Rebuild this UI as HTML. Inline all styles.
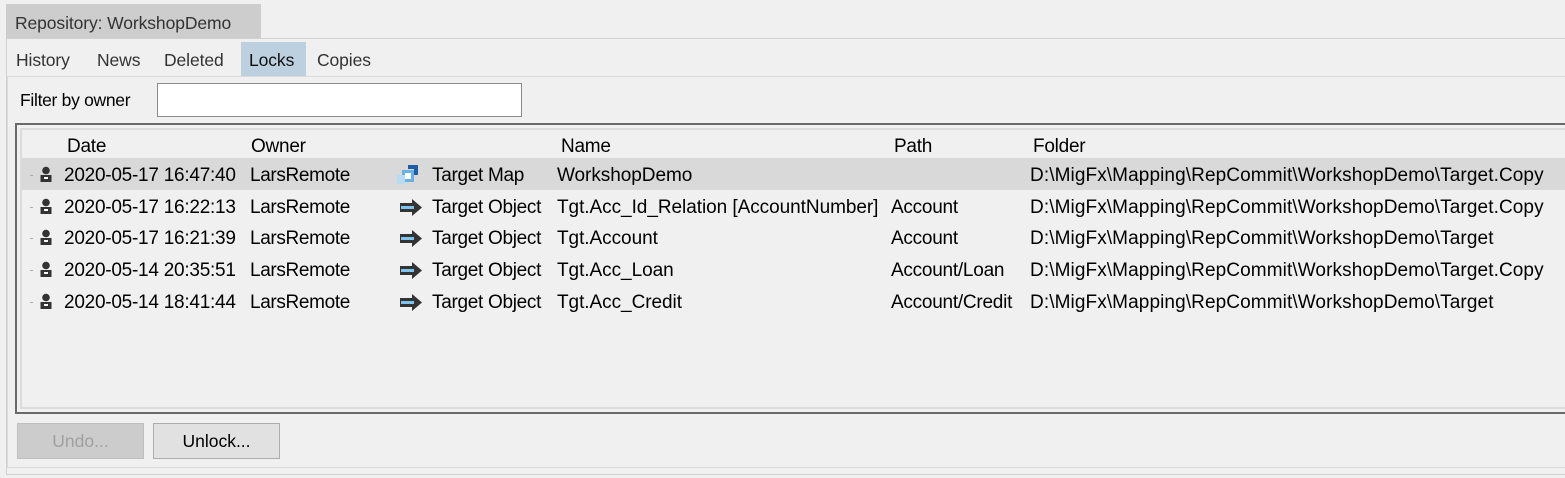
<!DOCTYPE html>
<html><head><style>
body{margin:0;width:1565px;height:478px;background:#f0f0f0;font-family:"Liberation Sans",sans-serif;color:#000;position:relative;overflow:hidden}
.a{position:absolute;white-space:nowrap}
.r{font-size:19px;letter-spacing:-0.25px}
.t{font-size:17.5px;color:#333;letter-spacing:-0.1px}
</style></head><body>
<div class="a" style="left:6px;top:4px;width:255px;height:34px;background:#cdcdcd"></div>
<div class="a t" style="left:15px;top:13px">Repository: WorkshopDemo</div>
<div class="a" style="left:6px;top:38px;width:1559px;height:437px;border:1px solid #d0d0d0;border-right:none;background:#f0f0f0;box-sizing:border-box"></div>
<div class="a" style="left:241px;top:42px;width:65px;height:34px;background:#bcd0df"></div>
<div class="a t" style="left:16px;top:50px">History</div>
<div class="a t" style="left:97px;top:50px">News</div>
<div class="a t" style="left:164px;top:50px">Deleted</div>
<div class="a t" style="left:249px;top:50px;color:#111">Locks</div>
<div class="a t" style="left:317px;top:50px">Copies</div>
<div class="a" style="left:7px;top:76px;width:1558px;height:392px;border:1px solid #dadada;border-right:none;box-sizing:border-box"></div>
<div class="a" style="left:20px;top:90px;font-size:17.5px;letter-spacing:-0.3px">Filter by owner</div>
<div class="a" style="left:157px;top:83px;width:365px;height:34px;background:#fff;border:1px solid #8a8a8a;box-sizing:border-box"></div>
<div class="a" style="left:15px;top:123px;width:1560px;height:291px;border:2px solid #6a6a6a;box-sizing:border-box"></div>
<div class="a" style="left:20px;top:128px;width:1550px;height:281px;border:2px solid #dcdcdc;box-sizing:border-box;background:#f0f0f0"></div>
<div class="a" style="left:22px;top:158px;width:1543px;height:32px;background:#d9d9d9"></div>
<div class="a r" style="left:67px;top:136px">Date</div>
<div class="a r" style="left:251px;top:136px">Owner</div>
<div class="a r" style="left:561px;top:136px">Name</div>
<div class="a r" style="left:894px;top:136px">Path</div>
<div class="a r" style="left:1033px;top:136px">Folder</div>
<div id="rows"></div>
<script>
var d=[["2020-05-17 16:47:40","Target Map","WorkshopDemo","","D:\\MigFx\\Mapping\\RepCommit\\WorkshopDemo\\Target.Copy",1],
["2020-05-17 16:22:13","Target Object","Tgt.Acc_Id_Relation [AccountNumber]","Account","D:\\MigFx\\Mapping\\RepCommit\\WorkshopDemo\\Target.Copy",0],
["2020-05-17 16:21:39","Target Object","Tgt.Account","Account","D:\\MigFx\\Mapping\\RepCommit\\WorkshopDemo\\Target",0],
["2020-05-14 20:35:51","Target Object","Tgt.Acc_Loan","Account/Loan","D:\\MigFx\\Mapping\\RepCommit\\WorkshopDemo\\Target.Copy",0],
["2020-05-14 18:41:44","Target Object","Tgt.Acc_Credit","Account/Credit","D:\\MigFx\\Mapping\\RepCommit\\WorkshopDemo\\Target",0]];
var h="";
d.forEach(function(r,i){var y=165+i*31.7;
h+='<div class="a" style="left:30px;top:'+(y+10)+'px;width:3px;height:1px;background:#aaa"></div>';
h+='<svg class="a" style="left:39px;top:'+(y+1)+'px" width="14" height="17"><circle cx="7" cy="4.5" r="3.8" fill="#333"/><rect x="1.5" y="9" width="11" height="7" fill="#333"/><rect x="5" y="11" width="4" height="2" fill="#fff"/></svg>';
if(r[5])h+='<svg class="a" style="left:395px;top:'+(y-1)+'px" width="26" height="24"><path d="M13 1h10v10h-4V5h-6z" fill="#1a5fa8"/><path d="M7 6h12v12H7z" fill="#6ab0e0"/><path d="M2 11h8v9H2z" fill="#b9dbf2"/><path d="M10 9h6v6h-6z" fill="#fff"/></svg>';
else h+='<svg class="a" style="left:398px;top:'+(y+1)+'px" width="26" height="20"><path d="M2 5h12V1l10 8.5L14 18v-4H2z" fill="#333"/><rect x="3" y="8" width="13" height="3" fill="#7cc4ef"/></svg>';
[[64,r[0],-0.25],[250,"LarsRemote",-0.35],[432,r[1],-0.3],[557,r[2],-0.05],[891,r[3],-0.25],[1030,r[4],0.1]].forEach(function(c){h+='<div class="a r" style="left:'+c[0]+'px;top:'+y+'px;letter-spacing:'+c[2]+'px">'+c[1]+'</div>';});});
document.getElementById("rows").innerHTML=h;
</script>
<div class="a" style="left:17px;top:423px;width:127px;height:36px;background:#cccccc;border:1px solid #bfbfbf;box-sizing:border-box;font-size:17.5px;color:#a0a0a0;text-align:center;line-height:34px">Undo...</div>
<div class="a" style="left:153px;top:423px;width:127px;height:36px;background:#e1e1e1;border:1px solid #adadad;box-sizing:border-box;font-size:17.5px;text-align:center;line-height:34px">Unlock...</div>
</body></html>
